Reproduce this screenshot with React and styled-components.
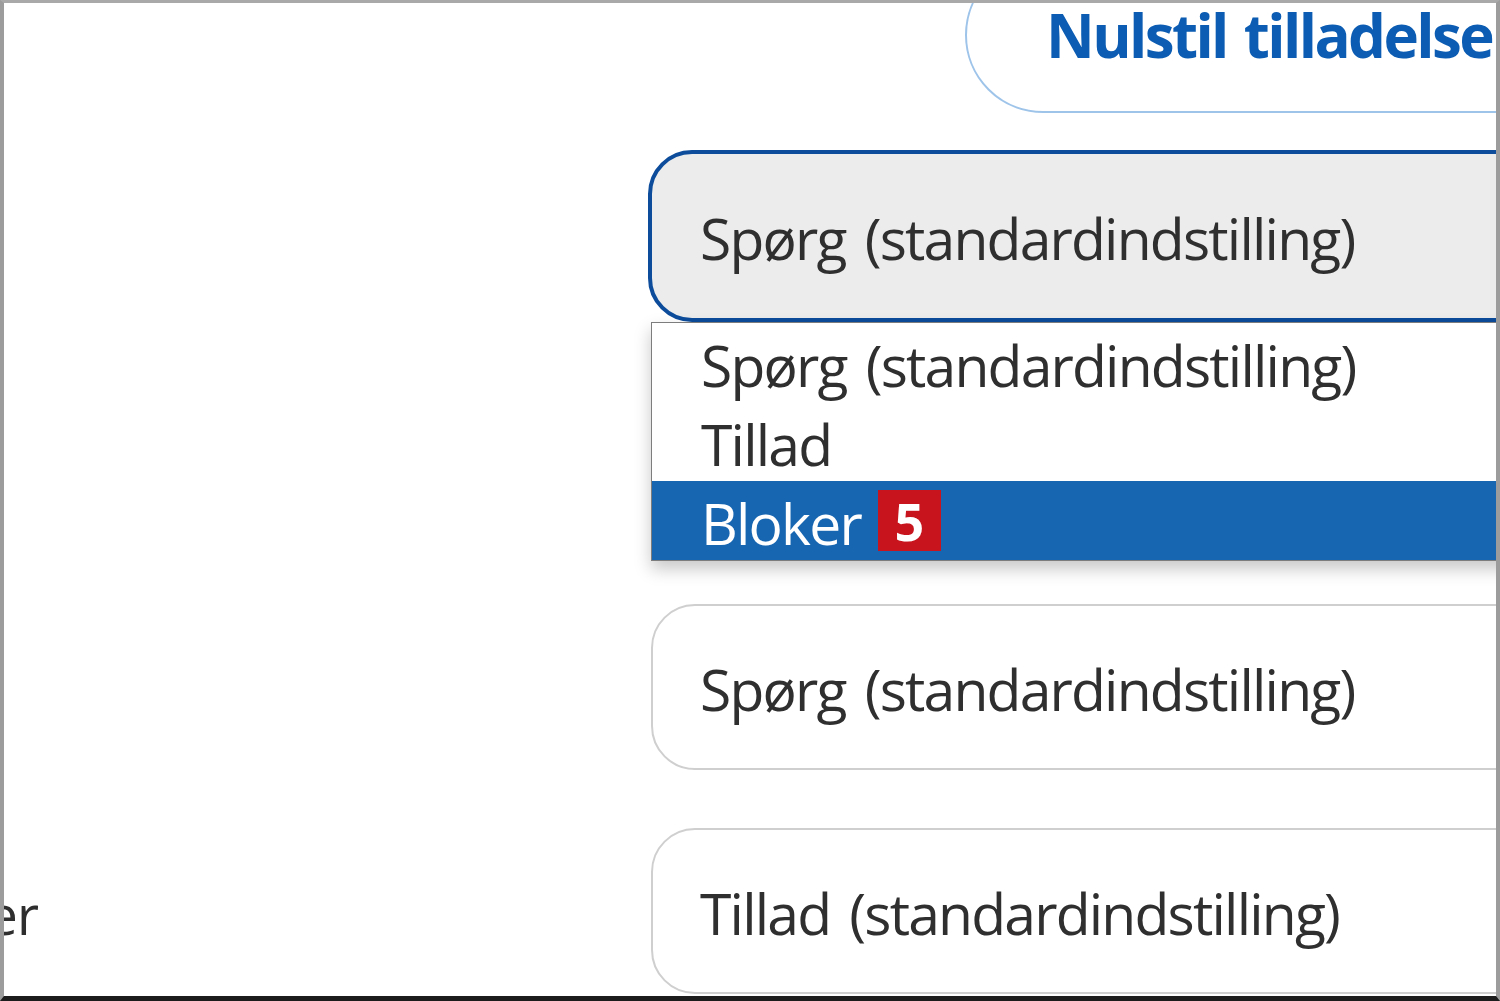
import React from 'react'
import styled, { createGlobalStyle } from 'styled-components'

const uiFont = `"Open Sans", "Noto Sans", "Liberation Sans", sans-serif`

const GlobalStyle = createGlobalStyle`
    html, body {
        margin: 0;
        padding: 0;
        background: #ffffff;
    }
`

const Frame = styled.div`
    width: 1500px;
    height: 1001px;
    box-sizing: border-box;
    overflow: hidden;
    background: #ffffff;
    border-top: 3px solid #a9a9a9;
    border-left: 4px solid #9c9c9c;
    border-right: 4px solid #9c9c9c;
    border-bottom: 5px solid #1c1c1c;
    font-family: ${uiFont};
    display: flex;
    flex-direction: column;
`

const Header = styled.div`
    display: flex;
    padding-left: 961px;
    margin-top: -46px;
`

const ResetButton = styled.button`
    flex-shrink: 0;
    height: 156px;
    width: 700px;
    box-sizing: border-box;
    padding: 0 0 0 79px;
    border: 2px solid #9fc4ea;
    border-radius: 84px;
    background: #ffffff;
    color: #0b5cb2;
    font-family: ${uiFont};
    font-weight: 700;
    font-size: 60px;
    letter-spacing: -2.6px;
    word-spacing: 4px;
    text-align: left;
    white-space: nowrap;
`

const Rows = styled.div`
    display: flex;
    flex-direction: column;
    gap: 58px;
    margin-top: 37px;
`

const Row = styled.div`
    display: grid;
    grid-template-columns: 34px 1fr;
    column-gap: 613px;
    align-items: center;
    position: relative;
`

const LabelCell = styled.div`
    display: flex;
    justify-content: flex-end;
    overflow: hidden;
    padding-top: 6px;
`

const Label = styled.span`
    white-space: nowrap;
    color: #2e2e2e;
    font-size: 54px;
    letter-spacing: -1px;
`

const SelectWrap = styled.div`
    position: relative;
`

const Select = styled.div`
    width: 1000px;
    box-sizing: border-box;
    display: flex;
    align-items: center;
    white-space: nowrap;
    color: #2f2f2f;
    font-size: 57px;
    letter-spacing: -1.8px;
    word-spacing: 6px;
    height: ${p => (p.$focused ? 172 : 166)}px;
    margin-left: ${p => (p.$focused ? -3 : 0)}px;
    padding-left: ${p => (p.$focused ? 48 : 47)}px;
    border: ${p => (p.$focused ? '4px solid #0c4c9b' : '2px solid #cfcfcf')};
    border-radius: 44px;
    background: ${p => (p.$focused ? '#ebeceb' : '#ffffff')};
    padding-top: 4px;
`

const Menu = styled.ul`
    position: absolute;
    top: 100%;
    left: 0;
    width: 1000px;
    margin: 0;
    padding: 0;
    list-style: none;
    background: #ffffff;
    border: 1px solid #7d7d7d;
    box-shadow: 0 8px 16px rgba(0, 0, 0, 0.22);
    z-index: 2;
`

const Option = styled.li`
    height: 79px;
    display: flex;
    align-items: center;
    gap: 17px;
    padding-left: 49px;
    white-space: nowrap;
    font-size: 57px;
    letter-spacing: -1.8px;
    word-spacing: 6px;
    color: ${p => (p.$active ? '#ffffff' : '#2f2f2f')};
    background: ${p => (p.$active ? '#1766b2' : 'transparent')};
`

const OptionText = styled.span`
    padding-top: 4px;
`

const Badge = styled.span`
    display: inline-flex;
    align-items: center;
    justify-content: center;
    width: 63px;
    height: 61px;
    background: #c8141d;
    color: #ffffff;
    font-weight: 700;
    font-size: 52px;
    letter-spacing: 0;
`

const rows = [
    { label: '', value: 'Spørg (standardindstilling)', open: true },
    { label: '', value: 'Spørg (standardindstilling)' },
    { label: '', value: 'Spørg (standardindstilling)' },
    { label: 'Billeder', value: 'Tillad (standardindstilling)' },
]

const options = [
    { text: 'Spørg (standardindstilling)' },
    { text: 'Tillad' },
    { text: 'Bloker', badge: '5', active: true },
]

export default function App() {
    return (
        <>
            <GlobalStyle />
            <Frame>
                <Header>
                    <ResetButton>Nulstil tilladelser</ResetButton>
                </Header>
                <Rows>
                    {rows.map((row, idx) => (
                        <Row key={idx} style={{ zIndex: row.open ? 2 : 1 }}>
                            <LabelCell>
                                <Label>{row.label}</Label>
                            </LabelCell>
                            <SelectWrap>
                                <Select $focused={row.open}>{row.value}</Select>
                                {row.open && (
                                    <Menu>
                                        {options.map(opt => (
                                            <Option key={opt.text} $active={opt.active}>
                                                <OptionText>{opt.text}</OptionText>
                                                {opt.badge && <Badge>{opt.badge}</Badge>}
                                            </Option>
                                        ))}
                                    </Menu>
                                )}
                            </SelectWrap>
                        </Row>
                    ))}
                </Rows>
            </Frame>
        </>
    )
}
